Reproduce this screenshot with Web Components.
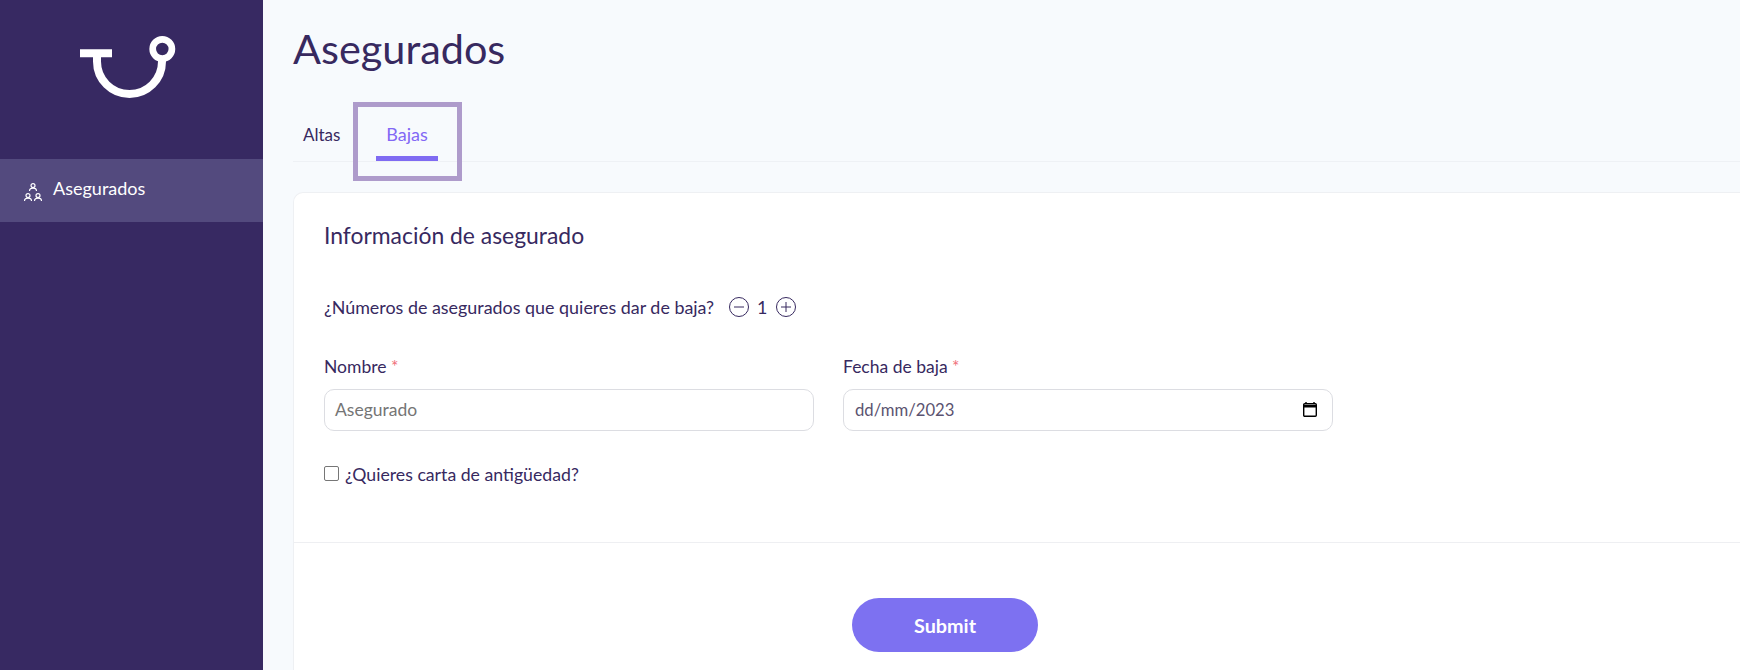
<!DOCTYPE html>
<html lang="es">
<head>
<meta charset="utf-8">
<title>Asegurados</title>
<style>
  html, body { margin: 0; height: 100%; }
  body { font-family: "Lato", "Liberation Sans", sans-serif; color: #37295f; overflow: hidden; }
</style>
</head>
<body>
<app-shell>
  <side-nav slot="nav"></side-nav>
  <page-title>Asegurados</page-title>
  <tab-bar></tab-bar>
  <baja-form></baja-form>
</app-shell>

<script>
class AppShell extends HTMLElement {
  constructor() {
    super();
    this.attachShadow({ mode: "open" });
    this.shadowRoot.innerHTML = `
      <style>
        :host { display: flex; height: 670px; background: #f7fafd; overflow: hidden; }
        main { flex: 1; min-width: 0; padding: 0 0 0 30px; }
      </style>
      <slot name="nav"></slot>
      <main><slot></slot></main>
    `;
  }
}

class SideNav extends HTMLElement {
  constructor() {
    super();
    this.attachShadow({ mode: "open" });
    this.shadowRoot.innerHTML = `
      <style>
        :host { display: block; width: 263px; flex: none; background: #372962; color: #fff; }
        .logo { height: 159px; }
        .item { display: flex; align-items: center; gap: 11px; height: 63px; box-sizing: border-box; padding: 0 0 5px 24px; background: #534a7e; font-size: 18px; }
        .item svg { margin-top: 8px; }
        svg { display: block; }
      </style>
      <div class="logo">
        <svg width="263" height="110" viewBox="0 0 263 110" fill="none" stroke="#fff">
          <path stroke-width="8" d="M80 53.3H112M97 53.3V61.5A32.5 32.5 0 0 0 162 61.5V58"/>
          <circle stroke-width="6.7" cx="162.3" cy="49" r="9.6"/>
        </svg>
      </div>
      <div class="item">
        <svg width="18" height="18" viewBox="0 0 18 18" fill="none" stroke="#fff" stroke-width="1.2">
          <circle cx="9" cy="2.6" r="2"/><path d="M5.5 8C5.5 6 7 5.2 9 5.2S12.5 6 12.5 8"/>
          <circle cx="4" cy="12.6" r="2"/><path d="M.5 18C.5 16 2 15.2 4 15.2S7.5 16 7.5 18"/>
          <circle cx="14" cy="12.6" r="2"/><path d="M10.5 18C10.5 16 12 15.2 14 15.2S17.5 16 17.5 18"/>
        </svg>
        <span>Asegurados</span>
      </div>
    `;
  }
}

class PageTitle extends HTMLElement {
  constructor() {
    super();
    this.attachShadow({ mode: "open" });
    this.shadowRoot.innerHTML = `
      <style>
        :host { display: block; font-size: 41.4px; line-height: 50px; padding-top: 23px; height: 77px; color: #37295f; }
      </style>
      <slot></slot>
    `;
  }
}

class TabBar extends HTMLElement {
  constructor() {
    super();
    this.attachShadow({ mode: "open" });
    this.shadowRoot.innerHTML = `
      <style>
        :host { display: flex; position: relative; height: 61px; border-bottom: 1px solid #eef1f5; font-size: 18px; }
        .tab { height: 61px; box-sizing: border-box; display: flex; align-items: center; padding-top: 7px; }
        .plain { width: 60px; padding-left: 10px; box-sizing: border-box; font-size: 17px; }
        .active { color: #8268f5; margin-left: 23px; width: 62px; justify-content: center; box-shadow: inset 0 -5px 0 #7f6bf2; }
        .mark { position: absolute; left: 60px; top: 2px; width: 99px; height: 69px; border: 5px solid #ae9bcb; }
      </style>
      <div class="tab plain">Altas</div>
      <div class="tab active">Bajas</div>
      <div class="mark"></div>
    `;
  }
}

class QtyStepper extends HTMLElement {
  constructor() {
    super();
    this.attachShadow({ mode: "open" });
    this.shadowRoot.innerHTML = `
      <style>
        :host { display: inline-flex; align-items: center; gap: 8px; }
        svg { display: block; }
      </style>
      <svg width="20" height="20" viewBox="0 0 20 20" fill="none" stroke="#37295f"><circle cx="10" cy="10" r="9.5"/><path d="M5 10H15"/></svg>
      <span>1</span>
      <svg width="20" height="20" viewBox="0 0 20 20" fill="none" stroke="#37295f"><circle cx="10" cy="10" r="9.5"/><path d="M5 10H15M10 5V15"/></svg>
    `;
  }
}

class FormField extends HTMLElement {
  constructor() {
    super();
    this.attachShadow({ mode: "open" });
    this.shadowRoot.innerHTML = `
      <style>
        :host { display: block; width: 490px; }
        label { display: block; font-size: 17.5px; line-height: 20px; margin-bottom: 12px; }
        i { font-style: normal; color: #f0707a; }
        .box { display: flex; align-items: center; justify-content: space-between; height: 42px; box-sizing: border-box; padding: 0 15px 1px 10px; border: 1px solid #dcdde2; border-radius: 10px; background: #fff; font-size: 17.5px; color: #757575; }
        .box.filled { color: #5b5370; font-size: 16.7px; padding-left: 11px; }
        svg { display: block; }
      </style>
      <label>${this.getAttribute("label")} <i>*</i></label>
      <div class="box"><span id="v"></span><slot></slot></div>
    `;
    this.shadowRoot.getElementById("v").textContent = this.getAttribute("value");
    if (this.hasAttribute("filled")) this.shadowRoot.querySelector(".box").classList.add("filled");
  }
}

class BajaForm extends HTMLElement {
  constructor() {
    super();
    this.attachShadow({ mode: "open" });
    this.shadowRoot.innerHTML = `
      <style>
        :host { display: block; margin-top: 30px; background: #fff; border: 1px solid #eef0f3; border-right: 0; border-radius: 10px 0 0 0; height: 480px; font-size: 17.9px; }
        .top { height: 349px; padding: 0 30px; border-bottom: 1px solid #eeeff2; }
        h2 { margin: 0; padding-top: 29px; font-size: 22.9px; line-height: 26px; font-weight: 400; }
        .qty { display: flex; align-items: center; gap: 15px; margin-top: 49px; line-height: 20px; }
        .row { display: flex; gap: 29px; margin-top: 40px; }
        .check { display: flex; align-items: center; gap: 6px; margin-top: 34px; line-height: 20px; font-size: 17.7px; }
        .cb { width: 13px; height: 13px; border: 1px solid #767676; border-radius: 2px; background: #fff; margin-bottom: 4px; }
        .foot { display: flex; justify-content: center; width: 1302px; padding-top: 55px; }
        .submit { width: 186px; height: 54px; border-radius: 27px; background: #7d71f1; color: #fff; display: flex; align-items: center; justify-content: center; font-size: 19.8px; font-weight: 700; padding-bottom: 1px; box-sizing: border-box; }
      </style>
      <div class="top">
        <h2>Información de asegurado</h2>
        <div class="qty"><span>¿Números de asegurados que quieres dar de baja?</span><qty-stepper></qty-stepper></div>
        <div class="row">
          <form-field label="Nombre" value="Asegurado"></form-field>
          <form-field label="Fecha de baja" value="dd/mm/2023" filled>
            <svg width="14" height="15" viewBox="0 0 14 15" fill="none"><path d="M3 0V2M11 0V2" stroke="#000" stroke-width="1.4"/><rect x=".7" y="1.7" width="12.6" height="12.6" rx="1" stroke="#000" stroke-width="1.4"/><path d="M1 3H13V5.5H1Z" fill="#000"/></svg>
          </form-field>
        </div>
        <div class="check"><span class="cb"></span><span>¿Quieres carta de antigüedad?</span></div>
      </div>
      <div class="foot"><div class="submit">Submit</div></div>
    `;
  }
}

customElements.define("app-shell", AppShell);
customElements.define("side-nav", SideNav);
customElements.define("page-title", PageTitle);
customElements.define("tab-bar", TabBar);
customElements.define("qty-stepper", QtyStepper);
customElements.define("form-field", FormField);
customElements.define("baja-form", BajaForm);
</script>
</body>
</html>
